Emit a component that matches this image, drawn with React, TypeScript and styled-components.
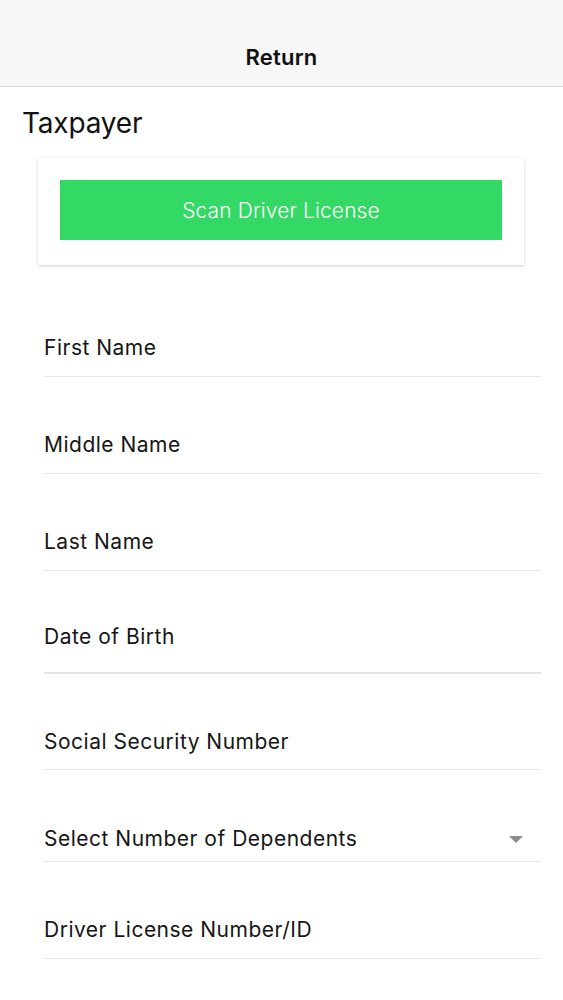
import React from "react";
import styled, { createGlobalStyle } from "styled-components";

const Global = createGlobalStyle`
  html, body { margin: 0; padding: 0; background: #ffffff; }
  body { font-family: Inter, "Noto Sans", Roboto, sans-serif; color: #111111; }
  * { box-sizing: border-box; }
`;

const Page = styled.div`
  width: 563px;
  min-height: 1000px;
  background: #ffffff;
  display: flex;
  flex-direction: column;
`;

const Header = styled.header`
  height: 87px;
  background: #f7f7f8;
  border-bottom: 1px solid #dcdcde;
  display: flex;
  align-items: flex-end;
  justify-content: center;
  padding-bottom: 15px;
`;

const HeaderTitle = styled.h1`
  margin: 0;
  font-size: 22px;
  line-height: 28px;
  font-weight: 600;
  color: #111111;
  letter-spacing: 0.2px;
`;

const SectionTitle = styled.h2`
  margin: 19px 0 0 22px;
  font-size: 28px;
  line-height: 34px;
  font-weight: 400;
  color: #111111;
  letter-spacing: -0.2px;
`;

const Card = styled.div`
  margin: 18px 39px 0 38px;
  padding: 22px 22px 25px 22px;
  background: #ffffff;
  box-shadow: 0 1px 3px rgba(0, 0, 0, 0.18), 0 0 1px rgba(0, 0, 0, 0.06);
`;

const ScanButton = styled.button`
  width: 100%;
  height: 60px;
  border: none;
  background: #34d865;
  color: #ffffff;
  font-family: inherit;
  font-size: 21px;
  font-weight: 300;
  letter-spacing: 0.1px;
  cursor: pointer;
`;

const FieldList = styled.div`
  display: flex;
  flex-direction: column;
  margin: 0 22px 0 44px;
`;

const Field = styled.div<{ $h: number; $pb: number; $thick?: boolean }>`
  height: ${(p) => p.$h}px;
  padding-bottom: ${(p) => p.$pb}px;
  border-bottom: ${(p) => (p.$thick ? "2px solid #e4e4e4" : "1px solid #e8e8e8")};
  display: flex;
  align-items: flex-end;
  justify-content: space-between;
`;

const Label = styled.span`
  font-size: 21px;
  line-height: 24px;
  letter-spacing: 0.5px;
  color: #151515;
`;

const Caret = styled.span`
  width: 0;
  height: 0;
  margin: 0 18px 8px 0;
  border-left: 7px solid transparent;
  border-right: 7px solid transparent;
  border-top: 7px solid #8a8a8a;
`;

const fields: { label: string; h: number; pb: number; thick?: boolean; select?: boolean }[] = [
  { label: "First Name", h: 112, pb: 16 },
  { label: "Middle Name", h: 97, pb: 16 },
  { label: "Last Name", h: 97, pb: 16 },
  { label: "Date of Birth", h: 103, pb: 23, thick: true },
  { label: "Social Security Number", h: 96, pb: 15 },
  { label: "Select Number of Dependents", h: 92, pb: 10, select: true },
  { label: "Driver License Number/ID", h: 97, pb: 16 },
];

export default function App() {
  return (
    <Page>
      <Global />
      <Header>
        <HeaderTitle>Return</HeaderTitle>
      </Header>
      <SectionTitle>Taxpayer</SectionTitle>
      <Card>
        <ScanButton>Scan Driver License</ScanButton>
      </Card>
      <FieldList>
        {fields.map((f) => (
          <Field key={f.label} $h={f.h} $pb={f.pb} $thick={f.thick}>
            <Label>{f.label}</Label>
            {f.select && <Caret />}
          </Field>
        ))}
      </FieldList>
    </Page>
  );
}
